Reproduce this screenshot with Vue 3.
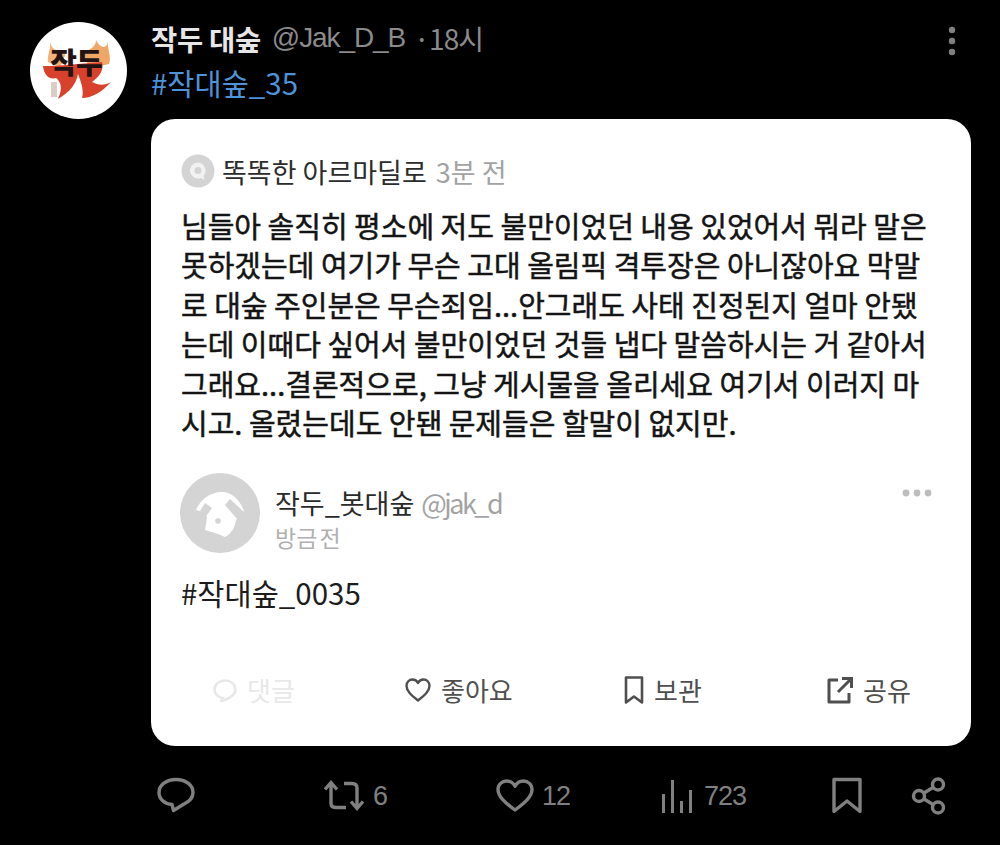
<script setup>
const bodyLines = [
  '님들아 솔직히 평소에 저도 불만이었던 내용 있었어서 뭐라 말은',
  '못하겠는데 여기가 무슨 고대 올림픽 격투장은 아니잖아요 막말',
  '로 대숲 주인분은 무슨죄임...안그래도 사태 진정된지 얼마 안됐',
  '는데 이때다 싶어서 불만이었던 것들 냅다 말씀하시는 거 같아서',
  '그래요...결론적으로, 그냥 게시물을 올리세요 여기서 이러지 마',
  '시고. 올렸는데도 안됀 문제들은 할말이 없지만.'
]
</script>

<template>
  <div class="tweet">
    <div class="avatar">
      <svg width="97" height="97" viewBox="0 0 97 97">
        <path d="M20 20 C22 28 28 30 36 31 L30 46 L18 40 C17 32 21 28 20 20Z" fill="#f2b27a" />
        <path d="M78 20 C76 28 70 26 66 18 C66 26 58 28 52 31 L60 46 L79 42 C82 34 77 28 78 20Z" fill="#f0a766" />
        <path d="M13 44 C14 54 20 58 26 56 C31 60 33 66 28 77 C40 70 46 62 48 52 C52 62 54 70 52 76 C62 76 72 70 81 60 C74 64 68 63 62 60 C70 54 74 48 72 40 L24 44Z" fill="#d8412b" />
        <text class="logo-text" x="46" y="52" text-anchor="middle">작두</text>
        <rect x="21" y="60" width="6" height="15" fill="#d9cdc6" />
      </svg>
    </div>

    <div class="main">
      <div class="head">
        <div class="meta">
          <span class="name">작두 대숲</span>
          <span class="handle">@Jak_D_B</span>
          <span class="when">· 18시</span>
        </div>
        <svg class="more" width="10" height="32" viewBox="0 0 10 32">
          <circle cx="5" cy="5" r="3.2" />
          <circle cx="5" cy="16" r="3.2" />
          <circle cx="5" cy="27" r="3.2" />
        </svg>
      </div>
      <div class="tag">#작대숲_35</div>

      <div class="card">
        <div class="source">
          <span class="qmark">
            <svg width="34" height="34" viewBox="0 0 34 34">
              <circle cx="17" cy="17" r="16.5" fill="#d4d4d4" />
              <path d="M17 8.500a8 8 0 1 0 3 15.400l3.500 2-1-4.200A8 8 0 0 0 17 8.500Z" fill="#f2f2f2" />
              <circle cx="17" cy="16.500" r="3.500" fill="#d4d4d4" />
            </svg>
          </span>
          <span class="source-name">똑똑한 아르마딜로</span>
          <span class="source-time">3분 전</span>
        </div>

        <div class="body">
          <div v-for="line in bodyLines" :key="line">{{ line }}</div>
        </div>

        <div class="bot">
          <svg class="bot-pic" width="80" height="80" viewBox="0 0 80 80">
            <circle cx="40" cy="40" r="40" fill="#d4d4d4" />
            <path d="M16 37 C20 27 30 19 42 19 C52 19 60 27 64 38 L56 47 C55 54 52 60 45 64 L38 61 L25 57 C26 50 28 44 26 40 Z" fill="#fff" />
            <path d="M20 38 L25 30 L32 35 L27 42 Z M45 32 L50 26 L65 40 L58 47 Z" fill="#d4d4d4" />
            <circle cx="38" cy="48" r="2.800" fill="#d4d4d4" />
          </svg>
          <div class="bot-text">
            <div>
              <span class="bot-name">작두_봇대숲</span>
              <span class="bot-handle">@jak_d</span>
            </div>
            <div class="bot-time">방금 전</div>
          </div>
          <svg class="bot-more" width="30" height="8" viewBox="0 0 30 8">
            <circle cx="4" cy="4" r="3.400" />
            <circle cx="15" cy="4" r="3.400" />
            <circle cx="26" cy="4" r="3.400" />
          </svg>
        </div>

        <div class="bot-tag">#작대숲_0035</div>

        <div class="card-actions">
          <div class="card-action faded">
            <svg width="26" height="26" viewBox="0 0 26 26" fill="none" stroke="currentColor" stroke-width="2.600">
              <path d="M13 3.500C7 3.500 2.500 7.500 2.500 12.500c0 4.500 3.800 8.300 8.800 8.600L9 24c6-1 14.500-5.500 14.500-11.500C23.500 7.500 19 3.500 13 3.500Z" stroke-linejoin="round" />
            </svg>
            <span>댓글</span>
          </div>
          <div class="card-action">
            <svg width="28" height="26" viewBox="0 0 28 26" fill="none" stroke="currentColor" stroke-width="2.400">
              <path d="M14 23.500C7 18 2.500 14 2.500 8.800 2.500 5 5.300 2.500 8.400 2.500c2.500 0 4.500 1.300 5.600 3.500 1.100-2.200 3.100-3.500 5.600-3.500 3.100 0 5.900 2.500 5.900 6.300C25.500 14 21 18 14 23.500Z" stroke-linejoin="round" />
            </svg>
            <span>좋아요</span>
          </div>
          <div class="card-action">
            <svg width="22" height="30" viewBox="0 0 22 30" fill="none" stroke="currentColor" stroke-width="2.600">
              <path d="M3 2.500h16v25l-8-6-8 6Z" stroke-linejoin="round" />
            </svg>
            <span>보관</span>
          </div>
          <div class="card-action">
            <svg width="28" height="28" viewBox="0 0 28 28" fill="none" stroke="currentColor" stroke-width="3">
              <path d="M12 4H3v22h20v-9" stroke-linejoin="round" />
              <path d="M12 16 25 3M16 2.500h9.500V12" />
            </svg>
            <span>공유</span>
          </div>
        </div>
      </div>

      <div class="actions">
        <svg width="38" height="38" viewBox="0 0 38 38" fill="none" stroke="currentColor" stroke-width="3.400">
          <path d="M19 2.500C9.500 2.500 2 8 2 15.500c0 6.500 5.500 11.500 13 12l1.500 6L27 27c5.500-2.500 9-6.500 9-11.500C36 8 28.500 2.500 19 2.500Z" stroke-linejoin="round" />
        </svg>
        <div class="stat">
          <svg width="41" height="34" viewBox="0 0 41 34" fill="none" stroke="currentColor" stroke-width="3.400">
            <path d="M7 4v20c0 3 1.500 4.500 4.500 4.500H22M1 10.500 7 3.500l6 7" />
            <path d="M20 4.500h8c3 0 5 1.500 5 4.500v20M27 22.500l6 7 6-7" />
          </svg>
          <span>6</span>
        </div>
        <div class="stat">
          <svg width="38" height="34" viewBox="0 0 38 34" fill="none" stroke="currentColor" stroke-width="3.400">
            <path d="M19 31C9 23.500 2 17.500 2 10.500 2 5.500 6 2 10.500 2c3.700 0 6.800 2 8.500 5.300C20.700 4 23.800 2 27.500 2 32 2 36 5.500 36 10.500 36 17.500 29 23.500 19 31Z" stroke-linejoin="round" />
          </svg>
          <span>12</span>
        </div>
        <div class="stat views">
          <svg width="32" height="34" viewBox="0 0 32 34" fill="currentColor">
            <rect x="1" y="15" width="3" height="19" />
            <rect x="10" y="1" width="3" height="33" />
            <rect x="19" y="22" width="3" height="12" />
            <rect x="28" y="11" width="3" height="23" />
          </svg>
          <span>723</span>
        </div>
        <svg width="32" height="38" viewBox="0 0 32 38" fill="none" stroke="currentColor" stroke-width="3.400">
          <path d="M3 2.500h26v32L16 24 3 34.500Z" stroke-linejoin="round" />
        </svg>
        <svg width="36" height="38" viewBox="0 0 36 38" fill="none" stroke="currentColor" stroke-width="3.400">
          <circle cx="8" cy="19" r="5.500" />
          <circle cx="27" cy="7.500" r="5.500" />
          <circle cx="27" cy="30.500" r="5.500" />
          <path d="M13 16 22 10.500M13 22l9 5.500" />
        </svg>
      </div>
    </div>
  </div>
</template>

<style>
body {
  background: #000;
}
</style>

<style scoped>
.tweet {
  display: flex;
  width: 1000px;
  height: 845px;
  box-sizing: border-box;
  padding: 22px 29px 0 30px;
  gap: 24px;
  background: #000;
  font-family: "Noto Sans CJK KR", "Liberation Sans", sans-serif;
  overflow: hidden;
}

.avatar {
  flex: none;
  width: 97px;
  height: 97px;
  border-radius: 50%;
  background: #fff;
  overflow: hidden;
}

.avatar svg {
  display: block;
}

.logo-text {
  fill: #231313;
  font-size: 29px;
  font-weight: 900;
  letter-spacing: -1px;
}

.main {
  flex: 1;
  min-width: 0;
}

.head {
  display: flex;
  justify-content: space-between;
  align-items: flex-start;
  height: 32px;
}

.meta {
  display: flex;
  align-items: center;
  height: 32px;
  white-space: nowrap;
}

.name {
  color: #e6e6e6;
  font-size: 28.500px;
  font-weight: 700;
  letter-spacing: -0.3px;
}

.handle {
  color: #8b8b8b;
  margin-left: 11px;
  font-family: "Liberation Sans", sans-serif;
  font-size: 28px;
  letter-spacing: -1.100px;
}

.when {
  color: #8b8b8b;
  margin-left: 9px;
  font-size: 28px;
  letter-spacing: -1px;
  word-spacing: -5px;
}

.more {
  fill: #808080;
  margin: 3px 14px 0 0;
}

.tag {
  color: #4d93d9;
  font-size: 29.500px;
  line-height: 34px;
  margin-top: 11px;
}

.card {
  height: 627px;
  margin-top: 20px;
  box-sizing: border-box;
  padding: 34px 30px 0;
  background: #fff;
  border-radius: 24px;
}

.source {
  display: flex;
  align-items: center;
  height: 36px;
  font-size: 27px;
}

.qmark {
  display: flex;
  margin-right: 7px;
}

.source-name {
  color: #2c2c2c;
}

.source-time {
  color: #a3a3a3;
  margin-left: 9px;
}

.body {
  margin-top: 17px;
  color: #141414;
  font-size: 29px;
  font-weight: 400;
  line-height: 39.400px;
  white-space: nowrap;
  -webkit-text-stroke: 0.5px #141414;
}

.bot {
  position: relative;
  display: flex;
  align-items: center;
  gap: 15px;
  margin-top: 30px;
}

.bot-pic {
  flex: none;
  margin-left: -1px;
}

.bot-text {
  font-size: 27px;
  line-height: 34px;
  padding-top: 14px;
}

.bot-name {
  color: #2a2a2a;
}

.bot-handle {
  color: #a3a3a3;
  margin-left: 7px;
  letter-spacing: -2.500px;
}

.bot-time {
  color: #b0b0b0;
  font-size: 23px;
  word-spacing: -3px;
}

.bot-more {
  position: absolute;
  top: 17px;
  right: 9px;
  fill: #bdbdbd;
}

.bot-tag {
  margin-top: 18px;
  color: #1c1c1c;
  font-size: 29.500px;
  line-height: 40px;
}

.card-actions {
  display: grid;
  grid-template-columns: 192px 219px 203px auto;
  align-items: center;
  margin-top: 60px;
  padding-left: 31px;
}

.card-action {
  display: flex;
  align-items: center;
  gap: 9px;
  color: #4f4f4f;
  font-size: 26px;
  line-height: 36px;
}

.card-action.faded {
  color: #e8e8e8;
}

.actions {
  display: grid;
  grid-template-columns: 167px 172px 165px 170px 80px auto;
  align-items: center;
  margin-top: 31px;
  padding-left: 6px;
  color: #808080;
}

.stat {
  display: flex;
  align-items: center;
  gap: 8px;
  font-size: 27px;
  line-height: 38px;
  letter-spacing: -1px;
  font-family: "Liberation Sans", sans-serif;
}

.stat.views {
  gap: 11px;
}
</style>
